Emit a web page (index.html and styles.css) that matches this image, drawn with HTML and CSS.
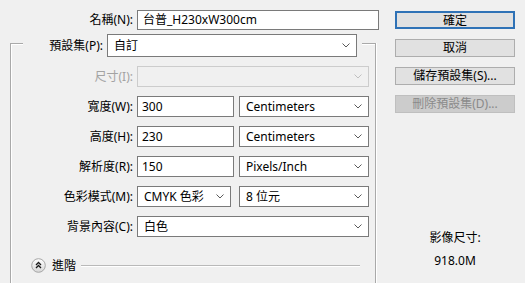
FILE: index.html
```html
<!DOCTYPE html>
<html lang="zh-Hant">
<head>
<meta charset="utf-8">
<title>新增文件</title>
<link rel="stylesheet" href="styles.css">
</head>
<body>
<div class="dialog">
  <div class="left">
    <div class="name-row">
      <label class="lbl name-lbl">名稱(N):</label>
      <div class="field input name">台普_H230xW300cm</div>
    </div>
    <div class="group">
      <div class="legend">
        <label class="lbl preset-lbl">預設集(P):</label>
        <div class="field select preset"><span>自訂</span><svg class="chev" width="8" height="5" viewBox="0 0 8 5"><polyline points="0.5,0.5 4,4 7.5,0.5"/></svg></div>
      </div>
      <div class="form">
        <label class="lbl disabled">尺寸(I):</label>
        <div class="field select off"><svg class="chev" width="8" height="5" viewBox="0 0 8 5"><polyline points="0.5,0.5 4,4 7.5,0.5"/></svg></div>

        <label class="lbl">寬度(W):</label>
        <div class="pair">
          <div class="field input num">300</div>
          <div class="field select unit"><span>Centimeters</span><svg class="chev" width="8" height="5" viewBox="0 0 8 5"><polyline points="0.5,0.5 4,4 7.5,0.5"/></svg></div>
        </div>

        <label class="lbl">高度(H):</label>
        <div class="pair">
          <div class="field input num">230</div>
          <div class="field select unit"><span>Centimeters</span><svg class="chev" width="8" height="5" viewBox="0 0 8 5"><polyline points="0.5,0.5 4,4 7.5,0.5"/></svg></div>
        </div>

        <label class="lbl">解析度(R):</label>
        <div class="pair">
          <div class="field input num">150</div>
          <div class="field select unit"><span>Pixels/Inch</span><svg class="chev" width="8" height="5" viewBox="0 0 8 5"><polyline points="0.5,0.5 4,4 7.5,0.5"/></svg></div>
        </div>

        <label class="lbl">色彩模式(M):</label>
        <div class="pair">
          <div class="field select mode"><span>CMYK 色彩</span><svg class="chev" width="8" height="5" viewBox="0 0 8 5"><polyline points="0.5,0.5 4,4 7.5,0.5"/></svg></div>
          <div class="field select unit"><span>8 位元</span><svg class="chev" width="8" height="5" viewBox="0 0 8 5"><polyline points="0.5,0.5 4,4 7.5,0.5"/></svg></div>
        </div>

        <label class="lbl">背景內容(C):</label>
        <div class="field select"><span>白色</span><svg class="chev" width="8" height="5" viewBox="0 0 8 5"><polyline points="0.5,0.5 4,4 7.5,0.5"/></svg></div>
      </div>
      <div class="advanced">
        <svg class="adv-icon" width="15" height="15" viewBox="0 0 15 15">
          <defs>
            <linearGradient id="g" x1="0" y1="0" x2="0" y2="1">
              <stop offset="0" stop-color="#ffffff"/>
              <stop offset="1" stop-color="#d6d6d6"/>
            </linearGradient>
          </defs>
          <circle cx="7.5" cy="7.5" r="6.8" fill="url(#g)" stroke="#a6a6a6" stroke-width="1"/>
          <polyline points="5,7 7.5,4.5 10,7" fill="none" stroke="#1a1a1a" stroke-width="1.3"/>
          <polyline points="5,10 7.5,7.5 10,10" fill="none" stroke="#1a1a1a" stroke-width="1.3"/>
        </svg>
        <span class="adv-text">進階</span>
        <span class="adv-line"></span>
      </div>
    </div>
  </div>
  <div class="right">
    <button class="btn default">確定</button>
    <button class="btn">取消</button>
    <button class="btn">儲存預設集(S)...</button>
    <button class="btn disabled-btn">刪除預設集(D)...</button>
    <div class="info">
      <div class="info-label">影像尺寸:</div>
      <div class="info-value">918.0M</div>
    </div>
  </div>
</div>
</body>
</html>
```

FILE: styles.css
```css
* { box-sizing: border-box; }

html, body {
  margin: 0;
  padding: 0;
  background: #f0f0f0;
}

body {
  font-family: "Noto Sans", "Noto Sans CJK TC", sans-serif;
  font-size: 12px;
  color: #000;
}

.dialog {
  display: flex;
  width: 525px;
  height: 283px;
  overflow: hidden;
}

.left {
  width: 385px;
  flex: none;
}

.lbl {
  text-align: right;
  line-height: 16px;
  white-space: nowrap;
}

.lbl.disabled { color: #a3a3a3; }

.name-row {
  display: flex;
  align-items: center;
  gap: 4px;
  margin-top: 10px;
  height: 20px;
}

.name-lbl { width: 133px; }

.field {
  display: flex;
  align-items: center;
  background: #fff;
  border: 1px solid #7a7a7a;
  white-space: nowrap;
  line-height: 16px;
}

.input { padding-left: 5px; }

.name {
  width: 242px;
  height: 20px;
}

.select { padding-left: 6px; padding-right: 6px; }

.select span { flex: 1; }

.chev {
  margin-left: auto;
  flex: none;
}

.chev polyline {
  fill: none;
  stroke: #5a5a5a;
  stroke-width: 1;
}

.select.off {
  background: #f0f0f0;
  border-color: #cccccc;
}

.select.off .chev polyline { stroke: #c0c0c0; }

.group {
  margin: 13px 0 0 10px;
  width: 366px;
  height: 260px;
  border: 1px solid #a9a9a9;
  border-bottom: none;
  box-shadow: inset 1px 1px 0 #fff, 1px 0 0 #fff;
}

.legend {
  display: flex;
  align-items: center;
  gap: 4px;
  width: fit-content;
  margin: -10px 0 0 12px;
  padding-right: 5px;
  background: #f0f0f0;
  height: 23px;
}

.preset-lbl { width: 80px; }

.preset {
  width: 250px;
  height: 23px;
}

.form {
  display: grid;
  grid-template-columns: 122px 232px;
  grid-auto-rows: 21px;
  column-gap: 4px;
  row-gap: 9px;
  margin-top: 9px;
  align-items: center;
}

.form > .field { height: 21px; }

.pair {
  display: flex;
  justify-content: space-between;
  height: 21px;
}

.pair .field { height: 21px; }

.num { width: 97px; padding-left: 4px; }
.mode { width: 94px; }
.unit { width: 130px; }

.advanced {
  display: flex;
  align-items: center;
  height: 15px;
  margin: 21px 0 0 20px;
}

.adv-icon { flex: none; }

.adv-text {
  margin-left: 6px;
  line-height: 15px;
}

.adv-line {
  margin-left: 5px;
  width: 279px;
  height: 2px;
  border-top: 1px solid #b9b9b9;
  border-bottom: 1px solid #ffffff;
}

.right {
  flex: none;
  width: 140px;
  padding: 11px 0 0 10px;
  display: flex;
  flex-direction: column;
  align-items: flex-start;
}

.btn {
  width: 120px;
  height: 18px;
  margin: 0 0 10px 0;
  padding: 0;
  font: inherit;
  line-height: 16px;
  color: #000;
  background: #e1e1e1;
  border: 1px solid #adadad;
  border-radius: 0;
}

.btn.default {
  border: 2px solid #2f72b6;
}

.btn.disabled-btn {
  background: #cccccc;
  border-color: #bfbfbf;
  color: #8a8a8a;
}

.info {
  width: 120px;
  margin-top: 107px;
  text-align: center;
  line-height: 16px;
}

.info-value { margin-top: 7px; }
```
